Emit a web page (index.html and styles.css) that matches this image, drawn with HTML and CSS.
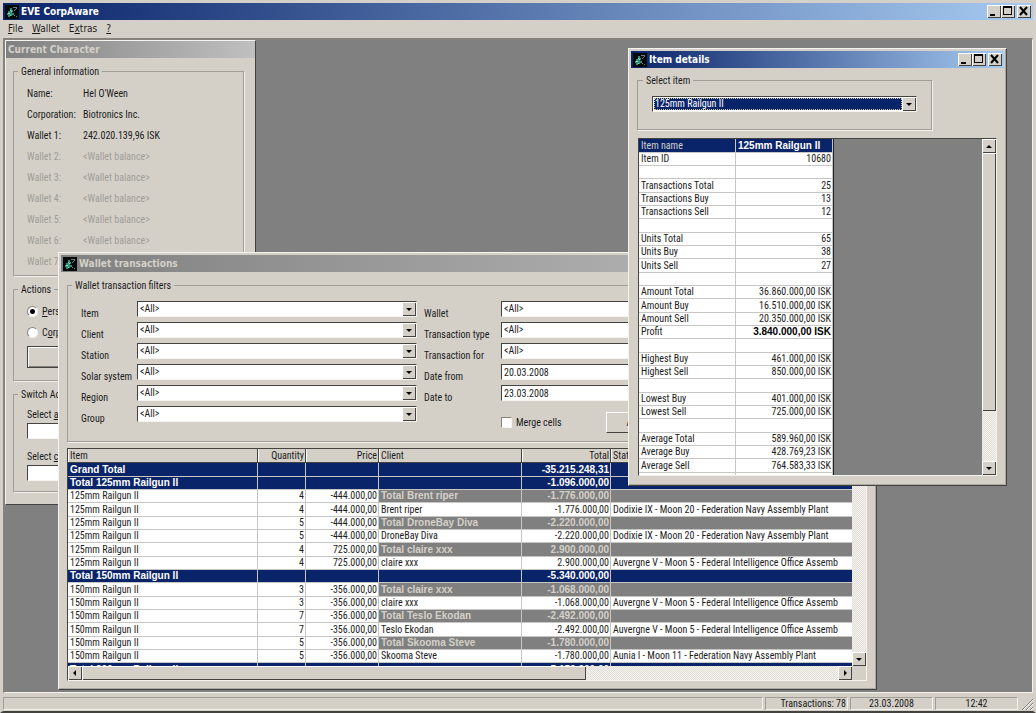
FILE: index.html
```html
<!DOCTYPE html>
<html lang="en">
<head>
<meta charset="utf-8">
<title>EVE CorpAware</title>
<link rel="stylesheet" href="styles.css">
</head>
<body>
<svg class="defs" aria-hidden="true">
  <symbol id="logo" viewBox="0 0 14 14">
    <rect width="14" height="14" fill="#04090a"/>
    <path d="M5 3h2v2h1v2H7v1h2v2H7v1H5v1H3v-2H2V8h1V6h2z" fill="#2f8f78"/>
    <path d="M5 5h1v1H5zM6 6h1v1H6zM3 8h2v1H3zM5 10h1v1H5z" fill="#8fe0c4"/>
    <path d="M8 2h4v1H8zM11 3h1v1h-1zM10 4h1v1h-1zM9 5h1v1H9z" fill="#6f7c80"/>
    <path d="M9 10h1v1H9zM11 11h1v1h-1z" fill="#4d9a9a"/>
  </symbol>
  <symbol id="min" viewBox="0 0 14 13"><path d="M3 9h5v2H3z"/></symbol>
  <symbol id="max" viewBox="0 0 14 13"><path d="M2 1h9v9H2zM3 3v6h7V3z" fill-rule="evenodd"/></symbol>
  <symbol id="close" viewBox="0 0 14 13"><path d="M3 2l7 8M10 2l-7 8" stroke="#000" stroke-width="2"/></symbol>
  <symbol id="down" viewBox="0 0 14 14"><path d="M4 6h6L7 9z"/></symbol>
  <symbol id="up" viewBox="0 0 14 14"><path d="M4 9h6L7 6z"/></symbol>
  <symbol id="left" viewBox="0 0 14 14"><path d="M8 4v6L5 7z"/></symbol>
  <symbol id="right" viewBox="0 0 14 14"><path d="M6 4v6l3-3z"/></symbol>
</svg>

<header class="titlebar active">
  <svg class="logo"><use href="#logo"/></svg>
  <h1>EVE CorpAware</h1>
  <button class="cap" aria-label="Minimize"><svg><use href="#min"/></svg></button>
  <button class="cap" aria-label="Maximize"><svg><use href="#max"/></svg></button>
  <button class="cap close" aria-label="Close"><svg><use href="#close"/></svg></button>
</header>
<nav class="menu">
  <button><u>F</u>ile</button>
  <button><u>W</u>allet</button>
  <button>E<u>x</u>tras</button>
  <button><u>?</u></button>
</nav>

<main class="mdi">
  <section class="window character">
    <div class="titlebar"><h2>Current Character</h2></div>
    <div class="char-body">
      <fieldset class="info">
        <legend>General information</legend>
        <dl>
          <dt>Name:</dt><dd>Hel O'Ween</dd>
          <dt>Corporation:</dt><dd>Biotronics Inc.</dd>
          <dt>Wallet 1:</dt><dd>242.020.139,96 ISK</dd>
          <dt class="off">Wallet 2:</dt><dd class="off">&lt;Wallet balance&gt;</dd>
          <dt class="off">Wallet 3:</dt><dd class="off">&lt;Wallet balance&gt;</dd>
          <dt class="off">Wallet 4:</dt><dd class="off">&lt;Wallet balance&gt;</dd>
          <dt class="off">Wallet 5:</dt><dd class="off">&lt;Wallet balance&gt;</dd>
          <dt class="off">Wallet 6:</dt><dd class="off">&lt;Wallet balance&gt;</dd>
          <dt class="off">Wallet 7:</dt><dd class="off">&lt;Wallet balance&gt;</dd>
        </dl>
      </fieldset>
      <fieldset class="actions">
        <legend>Actions</legend>
        <label class="choice"><input type="radio" name="scope" checked><span><u>P</u>ersonal</span></label>
        <label class="choice"><input type="radio" name="scope"><span>C<u>o</u>rporation</span></label>
        <button class="push default">Update</button>
      </fieldset>
      <fieldset class="switch">
        <legend>Switch Account</legend>
        <label for="acc">Select <u>a</u>ccount:</label>
        <input class="text" id="acc" type="text">
        <label for="chr">Select <u>c</u>haracter:</label>
        <input class="text" id="chr" type="text">
      </fieldset>
    </div>
  </section>

  <section class="window framed wallet">
    <div class="titlebar"><svg class="logo"><use href="#logo"/></svg><h2>Wallet transactions</h2></div>
    <div class="wallet-body">
      <fieldset class="filters">
        <legend>Wallet transaction filters</legend>
        <div class="filter-grid">
          <label for="f1">Item</label>
          <span class="combo"><select id="f1"><option>&lt;All&gt;</option></select><svg class="arrow"><use href="#down"/></svg></span>
          <label for="f7">Wallet</label>
          <span class="combo"><select id="f7"><option>&lt;All&gt;</option></select><svg class="arrow"><use href="#down"/></svg></span>
          <label for="f2">Client</label>
          <span class="combo"><select id="f2"><option>&lt;All&gt;</option></select><svg class="arrow"><use href="#down"/></svg></span>
          <label for="f8">Transaction type</label>
          <span class="combo"><select id="f8"><option>&lt;All&gt;</option></select><svg class="arrow"><use href="#down"/></svg></span>
          <label for="f3">Station</label>
          <span class="combo"><select id="f3"><option>&lt;All&gt;</option></select><svg class="arrow"><use href="#down"/></svg></span>
          <label for="f9">Transaction for</label>
          <span class="combo"><select id="f9"><option>&lt;All&gt;</option></select><svg class="arrow"><use href="#down"/></svg></span>
          <label for="f4">Solar system</label>
          <span class="combo"><select id="f4"><option>&lt;All&gt;</option></select><svg class="arrow"><use href="#down"/></svg></span>
          <label for="f10">Date from</label>
          <input class="text" id="f10" type="text" value="20.03.2008">
          <label for="f5">Region</label>
          <span class="combo"><select id="f5"><option>&lt;All&gt;</option></select><svg class="arrow"><use href="#down"/></svg></span>
          <label for="f11">Date to</label>
          <input class="text" id="f11" type="text" value="23.03.2008">
          <label for="f6">Group</label>
          <span class="combo"><select id="f6"><option>&lt;All&gt;</option></select><svg class="arrow"><use href="#down"/></svg></span>
          <div class="apply">
            <label class="choice"><input type="checkbox"><span>Merge cells</span></label>
            <button class="push">Apply</button>
          </div>
        </div>
      </fieldset>
      <div class="grid">
        <div class="pane">
          <table class="data">
            <colgroup><col class="c-item"><col class="c-qty"><col class="c-price"><col class="c-client"><col class="c-total"><col></colgroup>
            <thead><tr><th>Item</th><th class="n">Quantity</th><th class="n">Price</th><th>Client</th><th class="n">Total</th><th>Station</th></tr></thead>
            <tbody>
              <tr class="sum"><td>Grand Total</td><td></td><td></td><td></td><td class="n">-35.215.248,31</td><td></td></tr>
              <tr class="sum"><td>Total 125mm Railgun II</td><td></td><td></td><td></td><td class="n">-1.096.000,00</td><td></td></tr>
              <tr class="sub"><td>125mm Railgun II</td><td class="n">4</td><td class="n">-444.000,00</td><td>Total Brent riper</td><td class="n">-1.776.000,00</td><td></td></tr>
              <tr><td>125mm Railgun II</td><td class="n">4</td><td class="n">-444.000,00</td><td>Brent riper</td><td class="n">-1.776.000,00</td><td>Dodixie IX - Moon 20 - Federation Navy Assembly Plant</td></tr>
              <tr class="sub"><td>125mm Railgun II</td><td class="n">5</td><td class="n">-444.000,00</td><td>Total DroneBay Diva</td><td class="n">-2.220.000,00</td><td></td></tr>
              <tr><td>125mm Railgun II</td><td class="n">5</td><td class="n">-444.000,00</td><td>DroneBay Diva</td><td class="n">-2.220.000,00</td><td>Dodixie IX - Moon 20 - Federation Navy Assembly Plant</td></tr>
              <tr class="sub"><td>125mm Railgun II</td><td class="n">4</td><td class="n">725.000,00</td><td>Total claire xxx</td><td class="n">2.900.000,00</td><td></td></tr>
              <tr><td>125mm Railgun II</td><td class="n">4</td><td class="n">725.000,00</td><td>claire xxx</td><td class="n">2.900.000,00</td><td>Auvergne V - Moon 5 - Federal Intelligence Office Assemb</td></tr>
              <tr class="sum"><td>Total 150mm Railgun II</td><td></td><td></td><td></td><td class="n">-5.340.000,00</td><td></td></tr>
              <tr class="sub"><td>150mm Railgun II</td><td class="n">3</td><td class="n">-356.000,00</td><td>Total claire xxx</td><td class="n">-1.068.000,00</td><td></td></tr>
              <tr><td>150mm Railgun II</td><td class="n">3</td><td class="n">-356.000,00</td><td>claire xxx</td><td class="n">-1.068.000,00</td><td>Auvergne V - Moon 5 - Federal Intelligence Office Assemb</td></tr>
              <tr class="sub"><td>150mm Railgun II</td><td class="n">7</td><td class="n">-356.000,00</td><td>Total Teslo Ekodan</td><td class="n">-2.492.000,00</td><td></td></tr>
              <tr><td>150mm Railgun II</td><td class="n">7</td><td class="n">-356.000,00</td><td>Teslo Ekodan</td><td class="n">-2.492.000,00</td><td>Auvergne V - Moon 5 - Federal Intelligence Office Assemb</td></tr>
              <tr class="sub"><td>150mm Railgun II</td><td class="n">5</td><td class="n">-356.000,00</td><td>Total Skooma Steve</td><td class="n">-1.780.000,00</td><td></td></tr>
              <tr><td>150mm Railgun II</td><td class="n">5</td><td class="n">-356.000,00</td><td>Skooma Steve</td><td class="n">-1.780.000,00</td><td>Aunia I - Moon 11 - Federation Navy Assembly Plant</td></tr>
              <tr class="sum"><td>Total 200mm Railgun II</td><td></td><td></td><td></td><td class="n">-5.150.000,00</td><td></td></tr>
            </tbody>
          </table>
        </div>
        <div class="scroll v"><button aria-label="Scroll up"><svg><use href="#up"/></svg></button><i class="thumb"></i><i class="rest"></i><button aria-label="Scroll down"><svg><use href="#down"/></svg></button></div>
        <div class="scroll h"><button aria-label="Scroll left"><svg><use href="#left"/></svg></button><i class="thumb"></i><i class="rest"></i><button aria-label="Scroll right"><svg><use href="#right"/></svg></button></div>
      </div>
    </div>
  </section>

  <section class="window framed item">
    <div class="titlebar active">
      <svg class="logo"><use href="#logo"/></svg>
      <h2>Item details</h2>
      <button class="cap" aria-label="Minimize"><svg><use href="#min"/></svg></button>
      <button class="cap" aria-label="Maximize"><svg><use href="#max"/></svg></button>
      <button class="cap close" aria-label="Close"><svg><use href="#close"/></svg></button>
    </div>
    <div class="item-body">
      <fieldset class="select-item">
        <legend><label for="it">Select item</label></legend>
        <span class="combo focus"><select id="it"><option>125mm Railgun II</option></select><svg class="arrow"><use href="#down"/></svg></span>
      </fieldset>
      <div class="sheet">
        <div class="pane">
          <table class="details">
            <tbody>
              <tr class="sum"><th>Item name</th><td class="name">125mm Railgun II</td></tr>
              <tr><th>Item ID</th><td>10680</td></tr>
              <tr><th></th><td></td></tr>
              <tr><th>Transactions Total</th><td>25</td></tr>
              <tr><th>Transactions Buy</th><td>13</td></tr>
              <tr><th>Transactions Sell</th><td>12</td></tr>
              <tr><th></th><td></td></tr>
              <tr><th>Units Total</th><td>65</td></tr>
              <tr><th>Units Buy</th><td>38</td></tr>
              <tr><th>Units Sell</th><td>27</td></tr>
              <tr><th></th><td></td></tr>
              <tr><th>Amount Total</th><td>36.860.000,00 ISK</td></tr>
              <tr><th>Amount Buy</th><td>16.510.000,00 ISK</td></tr>
              <tr><th>Amount Sell</th><td>20.350.000,00 ISK</td></tr>
              <tr><th>Profit</th><td class="strong">3.840.000,00 ISK</td></tr>
              <tr><th></th><td></td></tr>
              <tr><th>Highest Buy</th><td>461.000,00 ISK</td></tr>
              <tr><th>Highest Sell</th><td>850.000,00 ISK</td></tr>
              <tr><th></th><td></td></tr>
              <tr><th>Lowest Buy</th><td>401.000,00 ISK</td></tr>
              <tr><th>Lowest Sell</th><td>725.000,00 ISK</td></tr>
              <tr><th></th><td></td></tr>
              <tr><th>Average Total</th><td>589.960,00 ISK</td></tr>
              <tr><th>Average Buy</th><td>428.769,23 ISK</td></tr>
              <tr><th>Average Sell</th><td>764.583,33 ISK</td></tr>
              <tr><th></th><td></td></tr>
            </tbody>
          </table>
        </div>
        <div class="scroll v"><button aria-label="Scroll up"><svg><use href="#up"/></svg></button><i class="thumb"></i><i class="rest"></i><button aria-label="Scroll down"><svg><use href="#down"/></svg></button></div>
      </div>
    </div>
  </section>
</main>

<footer class="status">
  <span class="fill"></span>
  <span class="right">Transactions: 78</span>
  <span>23.03.2008</span>
  <span>12:42</span>
  <svg class="grip" viewBox="0 0 12 12"><path d="M1 12L12 1M5 12l7-7M9 12l3-3" stroke="#85827c" fill="none"/><path d="M2 12L12 2M6 12l6-6M10 12l2-2" stroke="#fff" fill="none"/></svg>
</footer>
</body>
</html>
```
FILE: styles.css
```css
:root {
  --face: #d4d0c8;
  --light: #f4f3f0;
  --shade: #85827c;
  --dark: #45433f;
  --navy: #0a246a;
  --ui: "Roboto Condensed", Roboto, "Liberation Sans", sans-serif;
  --wide: "Liberation Sans", Arial, sans-serif;
  --caption: "DejaVu Sans Condensed", "DejaVu Sans", sans-serif;
}
* { box-sizing: border-box; }
body {
  margin: 0;
  height: 100vh;
  display: flex;
  flex-direction: column;
  overflow: hidden;
  background: var(--face);
  border: 3px solid var(--face);
  border-bottom: 2px solid var(--dark);
  color: #1c1c1c;
  font: 10px/13px var(--ui);
}
button, input, select { font: inherit; color: inherit; margin: 0; padding: 0; border: 0; border-radius: 0; }
h1, h2, dl, dd, fieldset { margin: 0; padding: 0; }
.defs { position: absolute; width: 0; height: 0; }

.titlebar {
  flex: none;
  display: flex;
  align-items: center;
  height: 17px;
  padding: 0 2px;
  background: linear-gradient(90deg, #808080, #c0c0c0);
  color: var(--face);
}
.titlebar.active { background: linear-gradient(90deg, var(--navy), #a6caf0); color: #fff; }
.titlebar h1, .titlebar h2 { flex: 1; font: bold 10px/15px var(--caption); }
.logo { width: 14px; height: 14px; margin-right: 2px; }
.cap {
  width: 14px;
  height: 13px;
  background: var(--face);
  box-shadow: inset 1px 1px #fff, inset -1px -1px var(--dark);
}
.cap.close { margin-left: 2px; }
.cap svg { display: block; width: 14px; height: 13px; }

.menu { flex: none; display: flex; gap: 9px; height: 18px; padding-left: 5px; }
.menu button { background: none; font: 10px/18px var(--caption); }

.mdi {
  flex: 1;
  position: relative;
  overflow: hidden;
  min-height: 0;
  background: #808080;
  border: 2px solid var(--shade);
  border-right: 1px solid var(--light);
  border-bottom: 1px solid var(--light);
}
.window {
  position: absolute;
  display: flex;
  flex-direction: column;
  background: var(--face);
  border: 1px solid var(--light);
  border-right-color: var(--dark);
  border-bottom-color: var(--dark);
}
.framed { padding: 2px; box-shadow: inset -1px -1px #aaa7a0; }
.character { left: 0; top: 0; width: 251px; height: 465px; }
.wallet { left: 53px; top: 212px; width: 819px; height: 438px; }
.item { left: 623px; top: 8px; width: 379px; height: 438px; }

fieldset { min-width: 0; border: 1px solid #a19e97; box-shadow: 1px 1px #f1efeb; }
legend { margin-left: -9px; padding: 0 3px; line-height: 13px; background: var(--face); }

.char-body { display: flex; flex-direction: column; gap: 7px; padding: 7px 11px 0 7px; }
.info { padding: 5px 0 3px 13px; }
.info dl { display: grid; grid-template-columns: 56px 1fr; grid-auto-rows: 21px; align-items: center; }
.info .off { color: #a09d97; }
.actions { padding: 5px 13px 12px; }
.choice { display: flex; align-items: center; gap: 4px; height: 21px; }
.choice input { appearance: none; flex: none; width: 11px; height: 11px; background: #fff; border: 1px solid var(--shade); border-right-color: var(--light); border-bottom-color: var(--light); }
.choice input[type="radio"] { border-radius: 50%; }
.choice input[type="radio"]:checked { background: radial-gradient(circle, #000 0 2px, #fff 3px); }
.push { min-width: 64px; height: 21px; background: var(--face); border: 1px solid #fff; border-right-color: var(--dark); border-bottom-color: var(--dark); }
.push.default { display: block; width: 100%; height: 22px; margin-top: 3px; border-color: var(--dark); box-shadow: inset 1px 1px #fff, inset -1px -1px var(--shade); }
.switch { display: flex; flex-direction: column; padding: 7px 13px 10px; }
.switch label { margin-bottom: 2px; }
.switch .text + label { margin-top: 11px; }
.text, .combo {
  height: 16px;
  background: #fff;
  border: 1px solid var(--dark);
  border-right-color: var(--light);
  border-bottom-color: var(--light);
}
.text { padding-left: 2px; min-width: 0; }
.combo { display: flex; position: relative; }
.combo select { flex: 1; appearance: none; padding: 0 14px 0 2px; background: transparent; line-height: 14px; outline: 0; }
.arrow { position: absolute; right: 0; top: 0; width: 14px; height: 14px; pointer-events: none; background: var(--face); box-shadow: inset 1px 1px #fff, inset -1px -1px var(--dark); }
.combo.focus select { margin: 1px 14px 1px 1px; padding: 0 0 0 1px; background: var(--navy); color: #fff; line-height: 12px; outline: 1px dotted #c9c59a; outline-offset: -1px; }

.wallet-body { flex: 1; min-height: 0; display: flex; flex-direction: column; gap: 6px; padding: 7px 7px 6px 6px; }
.filters { padding: 9px 13px 8px; }
.filter-grid { display: grid; grid-template-columns: 56px 280px 69px 1fr; grid-template-rows: repeat(5, 21px) 27px; align-items: start; }
.filter-grid > label { padding-top: 6px; white-space: nowrap; }
.filter-grid > label:nth-of-type(even) { padding-left: 7px; }
.filter-grid > :nth-child(4n) { margin-left: 15px; }
.apply { grid-column: 4; display: flex; align-items: center; gap: 44px; margin-left: 15px; padding-top: 6px; }

.grid, .sheet {
  flex: 1;
  min-height: 0;
  display: grid;
  grid-template-columns: 1fr 14px;
  border: 1px solid var(--dark);
  border-right-color: var(--light);
  border-bottom-color: var(--light);
  background: var(--face);
}
.grid { grid-template-rows: 1fr 14px; }
.pane { overflow: hidden; min-height: 0; min-width: 0; }
table { border-collapse: separate; border-spacing: 0; table-layout: fixed; }
th, td {
  height: 13px;
  padding: 0 2px;
  overflow: hidden;
  white-space: nowrap;
  text-align: left;
  font-weight: normal;
  line-height: 12px;
  border-right: 1px solid #c8c6c2;
  border-bottom: 1px solid #c8c6c2;
  background: #fff;
}
tbody tr:nth-child(3n+1) > * { height: 14px; }
.data { width: 100%; }
.data td:last-child, .data th:last-child { border-right: 0; }
.data th { height: 14px; background: var(--face); border-color: var(--dark); box-shadow: inset 1px 0 #fff; }
.c-item { width: 190px; }
.c-qty { width: 48px; }
.c-price { width: 73px; }
.c-client { width: 143px; }
.c-total { width: 89px; }
.n, .details td { text-align: right; }
.data .n { padding-right: 1px; }
.sum td { background: var(--navy); color: #fff; font: bold 10px/12px var(--wide); }
.sub td:nth-child(n+4) { background: #808080; color: var(--face); font: bold 10px/12px var(--wide); }

.scroll { display: flex; background: repeating-conic-gradient(#f4f2ee 0 25%, #e2dfd9 0 50%) 0 0 / 2px 2px; }
.scroll.v { flex-direction: column; }
.scroll button, .thumb { flex: none; background: var(--face); box-shadow: inset 1px 1px #fff, inset -1px -1px var(--dark); }
.scroll button, .scroll svg { display: block; width: 14px; height: 14px; }
.rest { flex: 1; }
.grid .v .thumb { height: 20px; }
.grid .h .thumb { width: 504px; }
.sheet .v .thumb { height: 258px; }

.item-body { flex: 1; min-height: 0; display: flex; flex-direction: column; gap: 8px; padding: 6px 7px 7px 6px; }
.select-item { width: 295px; padding: 9px 14px 17px; }
.sheet { margin-left: 1px; background: #808080; }
.details { width: 195px; border-right: 1px solid #222; }
.details th { width: 97px; }
.details .sum th { background: var(--navy); color: var(--face); }
.details td { padding-right: 1px; }
.details .name { text-align: left; }
.details .strong { font: bold 10px/12px var(--wide); color: #000; }

.status { flex: none; display: flex; gap: 2px; height: 18px; padding-top: 4px; }
.status span { width: 83px; height: 13px; line-height: 12px; text-align: center; white-space: nowrap; border: 1px solid #a19e97; border-right-color: var(--light); border-bottom-color: var(--light); }
.status .fill { flex: 1; }
.status .right { text-align: right; padding-right: 1px; }
.grip { width: 12px; height: 12px; margin: 1px 0 0 1px; }
```
